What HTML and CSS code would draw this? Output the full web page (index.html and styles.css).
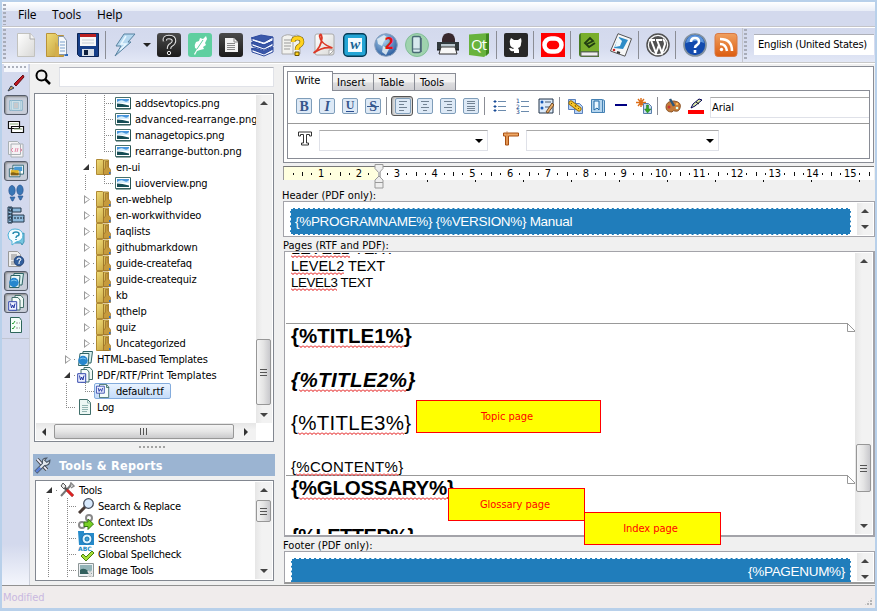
FILE: index.html
```
<!DOCTYPE html>
<html lang="en">
<head>
<meta charset="utf-8">
<title>Manual template editor</title>
<link rel="stylesheet" href="styles.css">
</head>
<body>
<svg class="defs" width="0" height="0">
  <defs>
    <linearGradient id="gold" x1="0" x2="1" y1="0" y2="1"><stop offset="0" stop-color="#f0dc78"/><stop offset="1" stop-color="#c09a38"/></linearGradient>
    <linearGradient id="dark" x1="0" x2="0" y1="0" y2="1"><stop offset="0" stop-color="#4a4a4a"/><stop offset="1" stop-color="#1b1b1b"/></linearGradient>
    <linearGradient id="orange" x1="0" x2="0" y1="0" y2="1"><stop offset="0" stop-color="#f0a060"/><stop offset="1" stop-color="#dc5c10"/></linearGradient>
    <linearGradient id="paper" x1="0" x2="1" y1="0" y2="1"><stop offset="0" stop-color="#fff"/><stop offset="1" stop-color="#d8d8d6"/></linearGradient>
    <radialGradient id="globe" cx=".4" cy=".3" r=".8"><stop offset="0" stop-color="#a8d0f0"/><stop offset="1" stop-color="#1d4f94"/></radialGradient>
    <symbol id="pic" viewBox="0 0 16 16"><path d="M.5 2.500h15v11H.5z" fill="#fff" stroke="#47706c"/><path d="M2 4h12v4H2z" fill="#4795dc"/><path d="M2 7q4-3 7-1t5-1v3H2z" fill="#d4ecfa"/><path d="M2 8.500q5 0 12 2V12H2z" fill="#164d55"/><path d="M15.500 3v11H1" fill="none" stroke="#285453"/></symbol>
    <symbol id="folder" viewBox="0 0 16 16"><path d="M.5.500h6l1 .5h5v14.500H.5z" fill="url(#gold)" stroke="#b08a34"/><path d="M7.500 1v14" stroke="#a07a2c"/><path d="M9.500 2.500h2.500v5l2.500 3v5H7.500v-4l2-2.500z" fill="#c69a3c" stroke="#99702a" stroke-width=".7"/><path d="M13 13h1.500v2H13z" fill="#2a70d8"/></symbol>
    <symbol id="pages-web" viewBox="0 0 16 16"><path d="M6 .5h9.500L14 12H5z" fill="#d9efee" stroke="#2f6466"/><path d="M3 2.500h9L11 14.500H1.500z" fill="#eef8f8" stroke="#2f6466"/><circle cx="6" cy="9.500" r="4.700" fill="#2787ce"/><path d="M3 8q3-2 6 0" stroke="#7cc4ee" fill="none"/></symbol>
    <symbol id="pages-doc" viewBox="0 0 16 16"><path d="M7 .5h6l2.500 3v9H7z" fill="#eef7f5" stroke="#426e6a"/><path d="M4 2.500h6l2 2.500v10H4z" fill="#f7fcfa" stroke="#426e6a"/><path d="M.7 6.700h8v8.600h-8z" fill="#f0f3ff" stroke="#3448ad"/><path d="M2.500 8.500l1 4.500 1.200-3 1.200 3 1.100-4.500" stroke="#2337a3" fill="none"/></symbol>
    <symbol id="worddoc" viewBox="0 0 16 16"><path d="M4 .5h8l2.500 3v12H4z" fill="#f4fbf9" stroke="#3d6b67"/><path d="M12 1v3h3" fill="none" stroke="#3d6b67"/><path d="M.5 2.500h9v8h-9z" fill="#eef1ff" stroke="#3448ad"/><path d="M2.500 4.500l1 4 1.500-3 1.500 3 1-4" stroke="#2337a3" fill="none"/></symbol>
    <symbol id="logdoc" viewBox="0 0 16 16"><path d="M2.500.5h8l3 3v12h-11z" fill="#edf7f4" stroke="#406e6a"/><path d="M10.500 1v3h3M5 6.500h6M5 8.500h6M5 10.500h6M5 12.500h5" fill="none" stroke="#93b5b2"/></symbol>
    <symbol id="crossed" viewBox="0 0 16 16"><path d="M2 14L12 3" stroke="#777" stroke-width="2"/><path d="M3 3l11 11" stroke="#555" stroke-width="2.600"/><path d="M2 4l2-3 3 3-2 3z" fill="#e9e9e9" stroke="#555"/><path d="M11 4l1-3 3 3-3 2" fill="none" stroke="#888" stroke-width="1.500"/><path d="M8 8l6 6" stroke="#d22" stroke-width="2.600"/></symbol>
    <symbol id="btn" viewBox="0 0 16 16"><rect x=".5" y=".5" width="15" height="15" rx="1.500" fill="#dde9f6" stroke="#7f9db9"/></symbol>
    <symbol id="chain" viewBox="0 0 16 16"><path d="M1.500 1.500h7v10h-7zM7.500 5.500h5l3 3v7h-8z" fill="#b7d2f5" stroke="#5b82bd"/><path d="M4 5l8 6" stroke="#9a6a00" stroke-width="5" stroke-linecap="round"/><path d="M4 5l8 6" stroke="#f5c52c" stroke-width="3.400" stroke-linecap="round"/><path d="M4 5l1 1M8 7l1 2M11 10l1 1" stroke="#7c5800"/></symbol>
  </defs>
</svg>

<div class="window">
  <nav class="menubar"><i class="grip"></i><span class="m-file">File</span><span class="m-tools">Tools</span><span class="m-help">Help</span></nav>

  <div class="toolbar">
    <i class="grip"></i>
    <div class="tools">
      <svg viewBox="0 0 24 24"><path d="M3.500.5h13l4 5v18h-17z" fill="url(#paper)" stroke="#c2c2be"/><path d="M16 .5v5.500h5" fill="#f4f4f4" stroke="#aaa"/></svg>
      <svg viewBox="0 0 24 24"><path d="M1.500.5h9l2 2h6v21h-17z" fill="url(#gold)" stroke="#b99239"/><path d="M13.500 3.500h5l3 4v14h-8z" fill="#f6f9fc" stroke="#8796aa"/><path d="M15 9h5M15 12h5M15 15h5M15 18h5" stroke="#7ba0cc"/><path d="M10 0v9l4 5v9.500h-4z" fill="#d4ae4c"/><path d="M21 21h2v2h-4z" fill="#2868bb"/></svg>
      <svg viewBox="0 0 24 24"><path d="M1.500.5h21v23h-19l-2-2z" fill="#173f88" stroke="#0d2453"/><path d="M4 1h16v3H4z" fill="#bb2020"/><path d="M4 4h16v9H4z" fill="#f8f8f8"/><path d="M6 7h12M6 10h12" stroke="#c6ced6"/><path d="M6 16h12v7H6z" fill="#d8dfe8"/><path d="M8 17h4v5H8z" fill="#10203d"/></svg>
      <i class="sep"></i>
      <svg viewBox="0 0 24 24"><path d="M11 1h11l-7 8h3L2 23l6-10H3z" fill="#b5d8f0" stroke="#57819f"/><path d="M13 3L8 11h5L7 17" fill="none" stroke="#e9f7ff" stroke-width="1.500"/></svg>
      <i class="drop"></i>
      <svg viewBox="0 0 24 24"><rect width="24" height="24" rx="3" fill="url(#dark)"/><path d="M8 8Q7 4 12 4t5 4q0 2-3 4-2 1-2 4" fill="none" stroke="#e8e8e8" stroke-width="4.500"/><path d="M8 8Q7 4 12 4t5 4q0 2-3 4-2 1-2 4" fill="none" stroke="#292929" stroke-width="2.500"/><circle cx="12" cy="20" r="1.700" fill="#222" stroke="#eee"/></svg>
      <svg viewBox="0 0 24 24"><rect width="24" height="24" rx="3" fill="#5fcfa0"/><path d="M6 21l3-5-2-1q-1-3 1-6l3-1 1-3 3 1 3-3 1 3-2 4 1 2-3 2 1 2-4 1-3 1-2 4z" fill="#fff"/><path d="M9 16l6-9" stroke="#5fcfa0"/></svg>
      <svg viewBox="0 0 24 24"><rect width="24" height="24" rx="3" fill="url(#dark)"/><path d="M6 5h9l4 4v10H6z" fill="#f3f3f3"/><path d="M15 5v4h4M8 10.500h8M8 12.500h8M8 14.500h8M8 16.500h8" fill="none" stroke="#888"/></svg>
      <svg viewBox="0 0 24 24"><g stroke="#2e4a9d" fill="#f3f6ff"><path d="M2 17v2l12 4 9-4v-3M2 11v2l12 4 9-4v-3M2 6v2l12 4 9-4V4"/><path d="M1 16l3-1 10 3 9-4v2l-9 5zM1 10l3-1 10 3 9-4v2l-9 5zM1 5l10-3 12 2-9 5z" fill="#3a58aa"/></g></svg>
      <svg viewBox="0 0 24 24"><path d="M1 4q5-4 11-1v18H1zM12 3q4-2 7 0v18h-7" fill="#f2f2ef" stroke="#aaa"/><path d="M3 7h7M3 10h7M3 13h7M3 16h6" stroke="#999"/><path d="M12 9q0-4 4.500-4t4.500 4q0 2-3 4-2 1-2 4" fill="none" stroke="#6b5400" stroke-width="4.500"/><path d="M12 9q0-4 4.500-4t4.500 4q0 2-3 4-2 1-2 4" fill="none" stroke="#ffd21e" stroke-width="3.500"/><path d="M14 19h4v3.500h-4z" fill="#ffd21e" stroke="#6b5400"/></svg>
      <svg viewBox="0 0 24 24"><rect x="3" y="1" width="19" height="21" rx="2" fill="url(#paper)" stroke="#aaa"/><path d="M22 17l-5 5v-5z" fill="#fff" stroke="#aaa"/><path d="M1.500 20Q9 15 10 5 9-1 7.500 3q1 8 13 12-9-2-19 5z" fill="none" stroke="#dc3826" stroke-width="1.700"/></svg>
      <svg viewBox="0 0 24 24"><rect x=".7" y=".7" width="22.600" height="22.600" rx="4" fill="#24a5d5" stroke="#063b55" stroke-width="1.400"/><path d="M5 5h14v14H5z" fill="#f4fbff"/><text x="12" y="16" class="wglyph">w</text></svg>
      <svg viewBox="0 0 24 24"><circle cx="12" cy="12" r="11.300" fill="url(#globe)" stroke="#8ba1bd"/><path d="M3 6l7-4 4 3-4 3-2 5-4-2zM9 13l6 3-3 6-4-3z" fill="#e6eff5" opacity=".85"/><text x="15" y="16" class="two">2</text></svg>
      <svg viewBox="0 0 24 24"><circle cx="12" cy="12" r="11.500" fill="#9fd3ae" stroke="#82bd98"/><rect x="7.500" y="3.500" width="8" height="16" rx="1.500" fill="#d7e9ee" stroke="#496b75" stroke-width="1.400"/><path d="M8 16h7M16.500 5v14" stroke="#607c88"/></svg>
      <svg viewBox="0 0 24 24"><path d="M6 10V6q1-6 6.500-6T19 6v4z" fill="#38282d"/><path d="M1 9h22v8H1z" fill="#31393d"/><path d="M5 11h14v5H5z" fill="#b9c5cc"/><path d="M5 14h14l2 7H3z" fill="#f8f8f8" stroke="#303030"/><path d="M1 17h3M20 17h3" stroke="#111"/></svg>
      <svg viewBox="0 0 24 24"><path d="M2 1.500L22 0v20l-5 4-15-2z" fill="#68b33d"/><path d="M19 1h3v19l-3 3z" fill="#40871f"/><text x="11.500" y="17" class="qt">Qt</text></svg>
      <i class="sep"></i>
      <svg viewBox="0 0 24 24"><rect width="24" height="24" rx="2" fill="#282828"/><path d="M7 5l3 2h4l3-2q1 3 0 6 0 3-3 4l1 2v3h-5v-2q-3 1-4-1l-1-2q3 0 4 1l1-1q-4-1-4-4-1-3 1-6z" fill="#fff"/></svg>
      <i class="sep"></i>
      <svg viewBox="0 0 24 24"><path d="M0 0h24v24H0z" fill="#f00"/><rect x="3.500" y="5.500" width="17" height="13" rx="6.500" fill="none" stroke="#fff" stroke-width="4.500"/></svg>
      <i class="sep"></i>
      <svg viewBox="0 0 24 24"><path d="M1 3q0-3 3-3h17v24H4q-3 0-3-3z" fill="#477b22"/><path d="M3 0h18v18H3z" fill="#79ae2c"/><path d="M3 19h17v4H3z" fill="#eee" stroke="#666"/><path d="M9 11l6-3-3-3-5 5 4 4 6-4" fill="none" stroke="#213d12" stroke-width="1.900"/></svg>
      <svg viewBox="0 0 24 24"><path d="M9 .7l13.500 5-6.500 17.500L1.500 18z" fill="#f7f7f7" stroke="#555"/><path d="M10 4l9 3-5 9-9-1z" fill="#2e8cc7"/><path d="M9 4l4 4-2 5-5 1z" fill="#eff8fc"/><circle cx="5" cy="17" r="1.300" fill="#c22"/><path d="M8 19l3 1" stroke="#333" stroke-width="2"/></svg>
      <i class="sep"></i>
      <svg viewBox="0 0 24 24"><circle cx="12" cy="12" r="11" fill="#f7f7f7" stroke="#505050" stroke-width="1.500"/><circle cx="12" cy="12" r="9" fill="#505050"/><path d="M3 7h6M10 7h6M5 7l5 13 3-8M11 7l5 13 3-9q0-3-2-5" fill="none" stroke="#fff" stroke-width="2"/></svg>
      <i class="sep"></i>
      <svg viewBox="0 0 24 24"><circle cx="12" cy="12" r="11" fill="#124aae" stroke="#82919f" stroke-width="1.700"/><path d="M3 10Q4 2 12 2t9 8q-8-4-18 0z" fill="#5c94dc"/><path d="M8 9q0-4 4-4t4 4q0 2-2 3-2 1-2 3M12 17v3" fill="none" stroke="#fff" stroke-width="2.600"/></svg>
      <svg viewBox="0 0 24 24"><rect x="1" y=".5" width="22" height="23" rx="3" fill="url(#orange)" stroke="#d87945"/><path d="M6 11q6 0 7 7M6 6q12 0 12 12" fill="none" stroke="#fff" stroke-width="2.500"/><circle cx="7.500" cy="16.500" r="1.700" fill="#fff"/></svg>
    </div>
    <div class="language"><i class="grip"></i><span class="lang-box">English (United States)</span></div>
  </div>

  <main class="workspace">
    <aside class="sidebar">
      <i class="hgrip"></i>
      <b><svg viewBox="0 0 18 18"><path d="M7 10L16 1l1 2-8 9z" fill="#c11720" stroke="#650d12"/><path d="M1 17l3-5 3 2z" fill="#d49e4e" stroke="#344154"/></svg></b>
      <b class="on"><svg viewBox="0 0 18 18"><path d="M2 4h14v11H2z" fill="#d8e6ec" stroke="#7babc4"/><path d="M4 4v11M14 4v11M6 6h6v7H6z" fill="#c8c9cc" stroke="#a7cadb"/></svg></b>
      <b><svg viewBox="0 0 18 18"><path d="M1.500 3.500h11v7h-11zM4.500 8.500h12v6h-12z" fill="#fff" stroke="#111" stroke-width="1.200"/><path d="M3 6h8M7 11h8" stroke="#87ac79"/></svg></b>
      <b><svg viewBox="0 0 18 18"><path d="M1.500 1.500h9l3 3v10h-12zM4 4h12v13H4z" fill="#f5f3f5" stroke="#a9b0b4"/><path d="M6 8l-2 2 2 2M13 8l2 2-2 2M8 12l1-4M10 12l1-4" fill="none" stroke="#e58aa8"/></svg></b>
      <b class="on"><svg viewBox="0 0 18 18"><path d="M5.500 2.500h12v10h-12zM1.500 6.500h12v9h-12z" fill="#fff" stroke="#255f6b"/><path d="M7 4h9v5H7z" fill="#4a9bd5"/><path d="M3 8h9v5H3z" fill="#e1b528"/><path d="M3 11q3-1 5 0t4 0v3H3z" fill="#846114"/></svg></b>
      <b><svg viewBox="0 0 18 18"><g fill="#3976b5" stroke="#254e8b" stroke-width=".6"><ellipse cx="5" cy="6.500" rx="3.200" ry="5"/><ellipse cx="13" cy="6" rx="3.200" ry="5"/><path d="M3 13h5l-2 4H5zM11 12h5l-2 4h-1z"/></g></svg></b>
      <b><svg viewBox="0 0 18 18"><path d="M1 1h4v16H1zM5 2h9v4H5zM5 9h12v7H5z" fill="#8db9dc" stroke="#263b4e"/><path d="M3 1v16M1 4h4M1 8h4M1 12h4M7 12h10" stroke="#151f2a" stroke-dasharray="2 1"/></svg></b>
      <b><svg viewBox="0 0 18 18"><path d="M11 8l6-3v9l-2 3-1-2H8z" fill="#76c5df" stroke="#4294b4"/><path d="M8 1q7 0 8 6 0 6-7 7l-4 3v-4q-4-1-4-6 1-6 7-6z" fill="#f2fcff" stroke="#4db2d8"/><path d="M6 6q0-2 3-2t3 2q0 2-2 2-1 1-1 2M9 11v1" fill="none" stroke="#238aae" stroke-width="1.500"/></svg></b>
      <b><svg viewBox="0 0 18 18"><path d="M1.500 1.500h9l3 3v12h-12z" fill="#eee" stroke="#999"/><path d="M4 5h6M4 7h7M4 9h7M4 12h5M4 14h5" stroke="#888"/><circle cx="12" cy="11" r="4.800" fill="#315f9e" stroke="#264579"/><path d="M10 10q0-2 2-2t2 2q-2 0-2 3v1" fill="none" stroke="#fff"/></svg></b>
      <b class="on"><svg viewBox="0 0 16 16"><use href="#pages-web"/></svg></b>
      <b class="on"><svg viewBox="0 0 16 16"><use href="#pages-doc"/></svg></b>
      <b><svg viewBox="0 0 18 18"><path d="M3.500 1.500h9l2 3v12h-11z" fill="#f5fffa" stroke="#2e665b"/><path d="M5 7l1 1 2-3M5 12l1 1 2-3" fill="none" stroke="#2ba23a"/><path d="M9 7h4M9 12h4" stroke="#999" stroke-dasharray="2 1"/></svg></b>
      <i class="side-end"></i>
    </aside>

    <section class="explorer">
      <div class="search"><svg viewBox="0 0 16 16"><circle cx="6.500" cy="6.500" r="5" fill="none" stroke="#000" stroke-width="2"/><path d="M10 10l5 5" stroke="#000" stroke-width="2.500"/></svg><span></span></div>
      <div class="tree-box">
        <div class="tree-main">
          <div class="tree">
            <p><i class="line"></i><i class="line"></i><i class="tee"></i><svg><use href="#pic"/></svg><span>addsevtopics.png</span></p>
            <p><i class="line"></i><i class="line"></i><i class="tee"></i><svg><use href="#pic"/></svg><span class="wide">advanced-rearrange.png</span></p>
            <p><i class="line"></i><i class="line"></i><i class="tee"></i><svg><use href="#pic"/></svg><span>managetopics.png</span></p>
            <p><i class="line"></i><i class="line"></i><i class="elbow"></i><svg><use href="#pic"/></svg><span class="wide">rearrange-button.png</span></p>
            <p><i class="line"></i><i class="open"></i><svg><use href="#folder"/></svg><span>en-ui</span></p>
            <p><i class="line"></i><i class="line"></i><i class="elbow"></i><svg><use href="#pic"/></svg><span>uioverview.png</span></p>
            <p><i class="line"></i><i class="closed"></i><svg><use href="#folder"/></svg><span>en-webhelp</span></p>
            <p><i class="line"></i><i class="closed"></i><svg><use href="#folder"/></svg><span>en-workwithvideo</span></p>
            <p><i class="line"></i><i class="closed"></i><svg><use href="#folder"/></svg><span>faqlists</span></p>
            <p><i class="line"></i><i class="closed"></i><svg><use href="#folder"/></svg><span>githubmarkdown</span></p>
            <p><i class="line"></i><i class="closed"></i><svg><use href="#folder"/></svg><span>guide-createfaq</span></p>
            <p><i class="line"></i><i class="closed"></i><svg><use href="#folder"/></svg><span>guide-createquiz</span></p>
            <p><i class="line"></i><i class="closed"></i><svg><use href="#folder"/></svg><span>kb</span></p>
            <p><i class="line"></i><i class="closed"></i><svg><use href="#folder"/></svg><span>qthelp</span></p>
            <p><i class="line"></i><i class="closed"></i><svg><use href="#folder"/></svg><span>quiz</span></p>
            <p><i class="line"></i><i class="closed"></i><svg><use href="#folder"/></svg><span>Uncategorized</span></p>
            <p><i class="closed"></i><svg><use href="#pages-web"/></svg><span>HTML-based Templates</span></p>
            <p><i class="open"></i><svg><use href="#pages-doc"/></svg><span class="wide">PDF/RTF/Print Templates</span></p>
            <p><i class="line"></i><i class="elbow"></i><em><svg><use href="#worddoc"/></svg><span>default.rtf</span></em></p>
            <p><i class="elbow"></i><svg><use href="#logdoc"/></svg><span>Log</span></p>
          </div>
          <div class="vscroll"><i class="up"></i><i class="thumb main-thumb"></i><i class="down"></i></div>
        </div>
        <div class="hscroll"><i class="left"></i><i class="hthumb"></i><i class="right"></i></div>
      </div>
      <i class="splitter"></i>
      <h2><svg viewBox="0 0 16 16"><path d="M3 2l9 10" stroke="#444" stroke-width="3.500"/><path d="M3 2l9 10" stroke="#eef" stroke-width="1.700"/><path d="M15 3l-3 2-2-2 2-2q-4 0-4 3v2l-7 7 2 2 7-7q5 0 5-5z" fill="#e4e9ef" stroke="#4a5666"/><path d="M2 14l4-4" stroke="#5b82d8" stroke-width="2.500"/></svg>Tools &amp; Reports</h2>
      <div class="tools-box">
        <div class="tree">
          <p><i class="open"></i><svg><use href="#crossed"/></svg><span>Tools</span></p>
          <p><i class="line"></i><i class="tee"></i><svg viewBox="0 0 16 16"><path d="M8 8l-7 7" stroke="#493b35" stroke-width="3"/><circle cx="10.500" cy="5.500" r="4.800" fill="#d8e9fc" stroke="#444c5b" stroke-width="1.300"/></svg><span>Search &amp; Replace</span></p>
          <p><i class="line"></i><i class="tee"></i><svg viewBox="0 0 16 16"><circle cx="4" cy="11" r="3" fill="none" stroke="#888" stroke-width="2"/><circle cx="11" cy="4" r="3" fill="none" stroke="#888" stroke-width="2"/><path d="M6 8h4V5l5.500 5-5.500 5.500v-3H6z" fill="#78d025" stroke="#347812"/></svg><span>Context IDs</span></p>
          <p><i class="line"></i><i class="tee"></i><svg viewBox="0 0 16 16"><path d="M0 1h6v2h10v12H1z" fill="#258aca"/><circle cx="9" cy="9" r="5" fill="#dff5ff" stroke="#116aab"/><circle cx="9" cy="9" r="2" fill="#42a2d8" stroke="#1474af"/></svg><span>Screenshots</span></p>
          <p><i class="line"></i><i class="tee"></i><svg viewBox="0 0 16 16"><text x="0" y="5" class="abc">ABC</text><path d="M3 10l2-2 3 3 6-6 2 2-8 8z" fill="#a5df36" stroke="#497f10"/></svg><span>Global Spellcheck</span></p>
          <p><i class="line"></i><i class="tee"></i><svg viewBox="0 0 16 16"><path d="M.5 1.500h15v13H.5z" fill="#edf0f3" stroke="#8d9696"/><path d="M2 3h12v9H2z" fill="#93b4b8"/><path d="M2 8q4-3 8 1t4 1v2H2z" fill="#315f5d"/><path d="M10 9l4 6M14 9l-4 6" stroke="#ddd" stroke-width="2"/></svg><span>Image Tools</span></p>
        </div>
        <div class="vscroll"><i class="up"></i><i class="thumb tools-thumb"></i><i class="down"></i></div>
      </div>
    </section>

    <section class="editor">
      <div class="ribbon">
        <div class="tabs"><span class="current">Write</span><span>Insert</span><span>Table</span><span>Tools</span></div>
        <div class="panel">
          <div class="row-one">
            <svg><use href="#btn"/><text x="8" y="13" class="g-b">B</text></svg>
            <svg><use href="#btn"/><text x="8" y="13" class="g-i">I</text></svg>
            <svg><use href="#btn"/><text x="8" y="11" class="g-u">U</text><path d="M4 13.500h8" stroke="#2b4f91"/></svg>
            <svg><use href="#btn"/><text x="8" y="13" class="g-b">S</text><path d="M2 8.500h12" stroke="#35588f"/></svg>
            <i class="sep"></i>
            <div class="pressed"><svg><use href="#btn"/><path d="M4 3.500h8M4 6.500h5M4 9.500h8M4 12.500h5" stroke="#718293"/></svg></div>
            <svg><use href="#btn"/><path d="M4 3.500h8M6 6.500h4M4 9.500h8M6 12.500h4" stroke="#718293"/></svg>
            <svg><use href="#btn"/><path d="M4 3.500h8M7 6.500h5M4 9.500h8M7 12.500h5" stroke="#718293"/></svg>
            <svg><use href="#btn"/><path d="M4 3.500h8M4 5.500h8M4 8.500h8M4 10.500h8M4 12.500h8" stroke="#718293"/></svg>
            <i class="sep"></i>
            <svg><path d="M6 3.500h8M6 8.500h8M6 12.500h8" stroke="#6b8bad"/><path d="M3 2v3M1.500 3.500h3M3 7v3M1.500 8.500h3M3 11v3M1.500 12.500h3" stroke="#174a96"/></svg>
            <svg><path d="M6 3.500h8M6 8.500h8M6 13.500h8" stroke="#6b8bad"/><text x="1" y="5" class="tiny">1</text><text x="1" y="10.500" class="tiny">2</text><text x="1" y="16" class="tiny">3</text></svg>
            <svg><path d="M1 1h14v14H1z" fill="#ddebfa" stroke="#213348"/><path d="M7 4h6M7 9h6" stroke="#445b70"/><circle cx="4" cy="4" r="1.500" fill="#1559b7"/><circle cx="4" cy="10" r="1.500" fill="#1559b7"/><path d="M8 14l6-9 2 2-6 8z" fill="#e8b06c" stroke="#704925"/></svg>
            <i class="sep"></i>
            <svg><use href="#chain"/></svg>
            <svg><path d="M1.500 1.500h11l2 1v12h-13z" fill="#b5d5ee" stroke="#4682b4"/><path d="M4 3h5v9l-2-2-3 2z" fill="#eaf7ff" stroke="#1d68a7"/><path d="M12.500 2v12" stroke="#4682b4"/></svg>
            <svg><path d="M2 7h12" stroke="#000082" stroke-width="2"/></svg>
            <svg><path d="M5 0v9M0 4.500h10M2 1l6 7M8 1L2 8" stroke="#dc6d17" stroke-width="1.400"/><path d="M7.500 5.500h5l3 3v7h-8z" fill="#c9dcf3" stroke="#597faa"/><path d="M10.500 7h2v4h2.500l-3.500 4-3-4h2z" fill="#33a624" stroke="#14751a" stroke-width=".5"/></svg>
            <i class="sep"></i>
            <svg><path d="M1 9Q1 3 9 3q8 1 6 7-1 4-5 3-2-1-3 1-6 0-6-5z" fill="#c47c39" stroke="#8a5428"/><path d="M5 1l4 7" stroke="#2d5879" stroke-width="2.500"/><circle cx="4" cy="9" r="1.500" fill="#c33"/><circle cx="12" cy="6" r="1.300" fill="#fb5"/><circle cx="12" cy="10" r="1.300" fill="#dfe"/></svg>
            <svg><path d="M0 12h16v4H0z" fill="#f00"/><path d="M3 10l2-4 6-5 3 1-7 6z" fill="#dbe8a4" stroke="#000057"/><path d="M8 4l3 2" stroke="#111"/></svg>
            <span class="font-box">Arial</span>
          </div>
          <div class="row-two">
            <svg class="type" viewBox="0 0 16 16"><path d="M1.500 1.500h13v4h-2V4h-3v8.500h2v2h-7v-2h2V4h-3v1.500h-2z" fill="#fff" stroke="#333"/></svg>
            <span class="combo style-box"></span>
            <svg class="ruler-icon" viewBox="0 0 16 16"><path d="M.5 2.500h15v3h-10v9h-3v-9h-2z" fill="#efa866" stroke="#a74e11"/><path d="M4 1v14" stroke="#bb601c" stroke-dasharray="1 1"/></svg>
            <span class="combo para-box"></span>
          </div>
        </div>
      </div>

      <div class="ruler">
        <div class="scale"><i></i><b>1</b><b>2</b><b>3</b><b>4</b><b>5</b><b>6</b><b>7</b><b>8</b><b>9</b><b>10</b><b>11</b><b>12</b><b>13</b><b>14</b><b>15</b><b></b></div>
        <div class="stops"></div>
        <svg class="marker" viewBox="0 0 10 25"><path d="M1 .5h8v4L5 9 1 4.500z" fill="#eee" stroke="#999"/><path d="M4 8h3v8H4z" fill="#bbb"/><path d="M5 12l4 4v2.500H1V16zM1 18.500h8V24H1z" fill="#eee" stroke="#999"/></svg>
      </div>

      <h3 class="header-label">Header (PDF only):</h3>
      <div class="field header-field"><div class="band">{%PROGRAMNAME%} {%VERSION%} Manual</div><div class="vscroll mini"><i class="up"></i><i class="down"></i></div></div>
      <h3 class="pages-label">Pages (RTF and PDF):</h3>
      <div class="field pages">
        <div class="document">
          <div class="doc-line level1"><u>LEVEL1</u> TEXT</div>
          <div class="doc-line level2"><u>LEVEL2</u> TEXT</div>
          <div class="doc-line level3"><u>LEVEL3</u> TEXT</div>
          <div class="break"><svg viewBox="0 0 9 9"><path d="M.5 0v8.500H8.500L.5.5" fill="#fff" stroke="#999"/></svg></div>
          <div class="doc-line title1">{<u>%TITLE1%</u>}</div>
          <div class="doc-line title2">{<u>%TITLE2%</u>}</div>
          <div class="doc-line title3">{<u>%TITLE3%</u>}</div>
          <div class="doc-line content">{<u>%CONTENT%</u>}</div>
          <div class="break"><svg viewBox="0 0 9 9"><path d="M.5 0v8.500H8.500L.5.5" fill="#fff" stroke="#999"/></svg></div>
          <div class="doc-line glossary">{<u>%GLOSSARY%</u>}</div>
          <div class="doc-line letter">{%LETTER%}</div>
        </div>
        <div class="vscroll"><i class="up"></i><i class="thumb pages-thumb"></i><i class="down"></i></div>
      </div>
      <h3 class="footer-label">Footer (PDF only):</h3>
      <div class="field footer-field"><div class="band">{%PAGENUM%}</div><div class="vscroll mini"><i class="up"></i><i class="down"></i></div></div>
    </section>
  </main>

  <footer class="status"><span>Modified</span><i class="sizegrip"></i></footer>
  <div class="note topic">Topic page</div>
  <div class="note gloss">Glossary page</div>
  <div class="note index">Index page</div>
</div>
</body>
</html>
```
FILE: styles.css
```
* { box-sizing: border-box; }
body { margin: 0; font: 11px "DejaVu Sans Condensed", "DejaVu Sans", sans-serif; font-stretch: condensed; color: #000; letter-spacing: -.3px; }
p, h2, h3 { margin: 0; font: inherit; }
i { font-style: normal; display: block; }
svg { display: block; flex: none; }
.defs { position: absolute; }
.window { position: relative; width: 877px; height: 611px; overflow: hidden; display: flex; flex-direction: column; border: solid #b8d0ea; border-width: 2px 2px 3px; background: #f0f0f0; }

.menubar { height: 25px; flex: none; display: flex; align-items: center; background: linear-gradient(#fff, #e8edf7 9px, #d3d9ed 9px); border-bottom: 1px solid #c4c4c8; font: 12px "Open Sans", sans-serif; letter-spacing: -.15px; }
.menubar span { padding-top: 1px; }
.grip { width: 3px; height: 21px; margin-left: 1px; background: repeating-linear-gradient(#a8acb8 0 2px, transparent 2px 4px); flex: none; }
.m-file { margin-left: 12px; width: 34px; }
.m-tools { width: 45px; }

.toolbar { height: 36px; flex: none; display: flex; align-items: center; background: linear-gradient(#fff 0 1px, #d3d9ed 1px, #d6dcef 60%, #e3e8f6); border-bottom: 1px solid #c8c8c8; }
.toolbar > .grip, .language .grip { height: 31px; }
.tools { margin-left: 8px; width: 728px; display: flex; gap: 7px; align-items: center; }
.tools svg { width: 24px; height: 24px; }
.sep { width: 1px; height: 28px; margin-left: -2px; background: #8b8d95; flex: none; }
.drop { width: 20px; margin: 0 -7px; display: flex; justify-content: center; flex: none; }
.drop::before { content: ""; border: solid transparent; border-width: 4px 4px 0; border-top-color: #222; }
.language { display: flex; align-items: center; height: 34px; flex: 1; border-left: 1px solid #c4c6ce; }
.lang-box { margin: 0 1px 0 7px; flex: 1; height: 21px; line-height: 20px; background: #fff; border-top: 1px solid #aeb0b8; padding-left: 4px; white-space: nowrap; letter-spacing: -.2px; }
.wglyph { font: italic bold 15px "Liberation Serif", serif; fill: #1b6595; text-anchor: middle; }
.two { font: bold 15px "DejaVu Sans Condensed", sans-serif; fill: #e31212; text-anchor: middle; }
.qt { font: 15px "Open Sans", sans-serif; fill: #fff; text-anchor: middle; letter-spacing: -1px; }

.workspace { display: flex; height: 522px; flex: none; border-top: 1px solid #fff; }
.sidebar { width: 28px; flex: none; background: linear-gradient(#d3d9ed 480px, #f2f4fb 519px); border-right: 1px solid #ccd0da; display: flex; flex-direction: column; align-items: center; }
.hgrip { width: 24px; height: 8px; flex: none; background: repeating-linear-gradient(90deg, #acb0bb 0 2px, transparent 2px 4px) 0 2px / 100% 2px no-repeat, #f5f7fc; }
.sidebar b { width: 24px; height: 22px; display: flex; align-items: center; justify-content: center; flex: none; }
.sidebar b svg { width: 18px; height: 18px; }
.sidebar .on { height: 20px; margin: 1px 0; border: 1px solid #555c6a; border-radius: 3px; background: #c8cdd9; box-shadow: inset 1px 1px 2px #888; }
.sidebar .on svg { height: 16px; width: 16px; }
.side-end { width: 100%; height: 3px; border-bottom: 1px solid #c0c5d2; }

.explorer { width: 246px; padding: 2px 1px 0 3px; display: flex; flex-direction: column; flex: none; }
.search { height: 27px; display: flex; padding-left: 2px; }
.search svg { width: 16px; height: 16px; margin-top: 3px; }
.search span { width: 215px; height: 20px; margin: 1px 0 0 8px; border: 1px solid #e0e2e8; border-top-color: #b0b2ba; background: #fff; }
.tree-box { width: 240px; height: 349px; flex: none; margin-left: 1px; border: 1px solid #828790; background: #fff; padding: 1px; }
.tree-main { display: flex; height: 328px; }
.tree { width: 220px; flex: none; overflow: hidden; padding-left: 21px; }
.tree p { display: flex; height: 16px; line-height: 16px; white-space: nowrap; }
.tree svg { width: 16px; height: 16px; margin-left: 1px; }
.tree span { margin-left: 4px; line-height: 18px; letter-spacing: -.17px; }
.tree .wide { letter-spacing: 0; }
.tree i { width: 19px; height: 16px; flex: none; }
.line { background: repeating-linear-gradient(#888 0 1px, transparent 1px 2px) 9px 0 / 1px 16px no-repeat; }
.tee, .elbow { background: repeating-linear-gradient(#888 0 1px, transparent 1px 2px) 9px 0 / 1px 16px no-repeat, repeating-linear-gradient(90deg, #888 0 1px, transparent 1px 2px) 9px 8px / 10px 1px no-repeat; }
.elbow { background-size: 1px 8px, 10px 1px; }
.open, .closed { background: repeating-linear-gradient(90deg, #888 0 1px, transparent 1px 2px) 17px 8px / 3px 1px no-repeat; position: relative; }
.open::before { content: ""; position: absolute; left: 7px; top: 5px; border: solid transparent; border-width: 0 0 6px 6px; border-bottom-color: #333; }
.closed::before { content: ""; position: absolute; left: 8px; top: 4px; width: 6px; height: 9px; background: #999; clip-path: polygon(0 0, 100% 50%, 0 100%); }
.closed::after { content: ""; position: absolute; left: 9px; top: 6px; width: 4px; height: 5px; background: #fff; clip-path: polygon(0 0, 100% 50%, 0 100%); }
.tree em { display: flex; font-style: normal; width: 77px; height: 16px; margin-left: -1px; border: 1px solid #84acdd; border-radius: 2px; background: linear-gradient(#e9f3ff, #c4dcfa); }
.tree em svg { height: 14px; margin-left: 0; }
.tree em span { margin-left: 5px; line-height: 16px; }

.vscroll { width: 17px; flex: none; display: flex; flex-direction: column; background: linear-gradient(90deg, #e6e6e6, #f2f2f2 40%); padding: 0 1px; margin-left: auto; }
.tree-main .vscroll { width: 16px; padding: 0 1px 0 0; }
.up, .down, .left, .right { width: 15px; height: 16px; flex: none; display: flex; align-items: center; justify-content: center; }
.up::before, .down::before { content: ""; border: solid transparent; border-width: 0 4px 4px; border-bottom-color: #444; }
.down::before { border-width: 4px 4px 0; border-top-color: #444; }
.left::before, .right::before { content: ""; border: solid transparent; border-width: 4px 4px 4px 0; border-right-color: #333; }
.right::before { border-width: 4px 0 4px 4px; border-left-color: #333; }
.down { margin-top: auto; }
.thumb { width: 15px; border: 1px solid #979797; border-radius: 2px; background: repeating-linear-gradient(#555 0 1px, transparent 1px 3px) 50% 50% / 7px 7px no-repeat, linear-gradient(90deg, #f4f4f4, #e4e4e4 50%, #c8c8cc); }
.main-thumb { height: 66px; margin-top: 228px; }
.tools-thumb { height: 22px; margin-top: 2px; }
.pages-thumb { height: 48px; margin-top: 175px; }
.hscroll { width: 220px; height: 17px; display: flex; align-items: center; background: linear-gradient(#e6e6e6, #f2f2f2 40%); }
.hthumb { width: 180px; height: 15px; margin-left: 3px; border: 1px solid #979797; border-radius: 2px; background: repeating-linear-gradient(90deg, #555 0 1px, transparent 1px 3px) 50% 50% / 8px 7px no-repeat, linear-gradient(#f4f4f4, #e5e5e5 50%, #cacacc); }
.right { margin-left: 4px; }
.splitter { width: 27px; height: 2px; margin: 4px auto 6px 106px; flex: none; background: repeating-linear-gradient(90deg, #a2a2a2 0 2px, transparent 2px 4px); }
h2 { height: 22px; flex: none; display: flex; align-items: center; background: #9bb4d2; color: #fff; font: bold 12.500px "DejaVu Sans Condensed", sans-serif; letter-spacing: .3px; }
h2 svg { width: 17px; height: 17px; margin: 0 8px 0 1px; }
.tools-box { width: 239px; height: 101px; flex: none; margin: 4px 0 0 2px; border: 1px solid #828790; background: #fff; padding: 1px; display: flex; }
.tools-box .tree { width: 218px; padding-left: 2px; }
.tools-box .tree span { letter-spacing: -.27px; }
.abc { font: bold 6px "DejaVu Sans", sans-serif; fill: #218ac4; letter-spacing: 0; }

.editor { width: 599px; padding-left: 7px; flex: none; display: flex; flex-direction: column; }
.ribbon { width: 591px; height: 97px; margin-top: 2px; border: 1px solid #898c95; background: #fff; padding: 3px; flex: none; }
.tabs { height: 20px; display: flex; align-items: flex-end; letter-spacing: 0; }
.tabs span { height: 17px; width: 41px; border: 1px solid #898c95; border-left: 0; border-bottom: 0; background: linear-gradient(#f3f3f3 50%, #dddddf 55%, #d0d0d4); line-height: 18px; padding-left: 5px; }
.tabs span:nth-child(2) { padding-left: 4px; }
.tabs .current { width: 46px; height: 20px; border-left: 1px solid #898c95; background: #fff; line-height: 18px; padding-left: 7px; margin-bottom: -1px; position: relative; letter-spacing: -.2px; }
.panel { width: 583px; height: 69px; border: 1px solid #898c95; }
.row-one { height: 33px; display: flex; gap: 7px; align-items: center; padding: 0 0 2px 8px; border-bottom: 1px solid #999; }
.row-one > svg, .pressed svg { width: 16px; height: 16px; }
.row-one .sep { height: 18px; }
.pressed { margin: 0 -3px; width: 22px; height: 20px; border: 1px solid #555; border-radius: 3px; padding: 1px 0 0 3px; background: #ddd; box-shadow: inset 1px 1px 2px #aaa; }
.g-b, .g-i { font: bold 14px "Liberation Serif", serif; fill: #36558b; text-anchor: middle; }
.g-i { font-style: italic; }
.g-u { font: bold 12px "Liberation Serif", serif; fill: #36558b; text-anchor: middle; }
.tiny { font: 6px "DejaVu Sans", sans-serif; fill: #124387; }
.font-box { height: 21px; flex: 1; line-height: 19px; margin: 3px 0 0 -1px; border: 1px solid #dfe1e8; border-top-color: #aaa; border-right: 0; padding-left: 1px; letter-spacing: -.1px; }
.row-two { height: 34px; display: flex; align-items: center; padding-left: 9px; }
.row-two svg { width: 16px; height: 17px; margin-top: -5px; }
.combo { height: 21px; margin-top: -1px; border: 1px solid #dfe1e8; border-top-color: #aaa; display: flex; align-items: center; justify-content: flex-end; padding-right: 4px; }
.combo::before { content: ""; border: solid transparent; border-width: 4px 4px 0; border-top-color: #000; }
.style-box { width: 169px; margin-left: 6px; }
.row-two .ruler-icon { margin-left: 15px; }
.para-box { width: 193px; margin-left: 7px; }

.ruler { position: relative; height: 25px; margin-top: 3px; flex: none; }
.scale { height: 14px; width: 591px; display: flex; overflow: hidden; border-top: 1px solid #777; border-left: 1px solid #999; background: linear-gradient(90deg, #ffffdf 95px, #fff 95px); letter-spacing: 0; }
.scale i { width: 18.300px; flex: none; background: linear-gradient(#111, #111) 8.500px 6px / 1px 2px no-repeat; }
.scale b { width: 37.800px; flex: none; font-weight: normal; text-align: center; line-height: 14px; background: linear-gradient(#111, #111) 0 5px / 1px 4px no-repeat, linear-gradient(#111, #111) 9px 6px / 1px 2px no-repeat, linear-gradient(#111, #111) 28px 6px / 1px 2px no-repeat; }
.stops { height: 2px; margin: 0 13px 0 144px; background: repeating-linear-gradient(90deg, #111 0 1px, transparent 1px 48px); }
.marker { position: absolute; left: 91px; top: -2px; width: 10px; height: 25px; }

h3 { flex: none; white-space: nowrap; line-height: 14px; height: 12px; letter-spacing: .03px; }
.header-label { margin: -2px 0 0 -1px; }
.pages-label { height: 14px; line-height: 17px; }
.footer-label { height: 14px; line-height: 17px; }
.field { flex: none; display: flex; background: #fff; border: 1px solid #a3a3a9; }
.header-field { width: 592px; height: 36px; padding: 1px; }
.band { width: 561px; height: 27px; margin: 5px 0 0 5px; border: 1px dashed #fff; background: #207dbb; color: #fff; font: 13.500px/26px "Liberation Sans", sans-serif; letter-spacing: -.3px; padding-left: 4px; }
.mini { width: 16px; padding: 0; }
.pages { width: 591px; height: 286px; margin-left: 1px; padding: 1px; border-width: 1px 2px 2px 1px; }
.document { width: 570px; height: 281px; overflow: hidden; font-family: "Liberation Sans", sans-serif; letter-spacing: 0; }
.doc-line { padding-left: 5px; white-space: nowrap; }
.doc-line u { text-decoration: none; padding-bottom: 1px; background: url("data:image/svg+xml,%3Csvg xmlns='http://www.w3.org/2000/svg' width='4' height='3'%3E%3Cpath d='M0 .5L2 2.500L4 .5' fill='none' stroke='%23e00000'/%3E%3C/svg%3E") 0 100% / 4px 3px repeat-x; }
.level1 { font-size: 16px; line-height: 18px; height: 18px; margin-top: -13px; }
.level2 { font-size: 14.500px; height: 17px; line-height: 17px; }
.level3 { font-size: 13.300px; height: 17px; line-height: 15px; letter-spacing: -.4px; }
.break { width: 570px; height: 1px; background: linear-gradient(90deg, #999 561px, transparent 561px); display: flex; justify-content: flex-end; }
.break svg { width: 9px; height: 9px; }
.level3 + .break { margin-top: 31px; }
.title1, .title2, .title3, .glossary, .letter { font-size: 20.500px; height: 24px; line-height: 23px; }
.title1, .title2, .glossary, .letter { font-weight: bold; }
.title2 { font-style: italic; margin-top: 20px; letter-spacing: .4px; }
.title3 { margin-top: 19px; letter-spacing: .3px; }
.content { font-size: 15px; height: 17px; line-height: 18px; margin-top: 23px; letter-spacing: .3px; }
.glossary { letter-spacing: -.25px; }
.letter { margin-top: 25px; font-size: 20px; letter-spacing: -.5px; }
.footer-field { width: 591px; height: 33px; margin-left: 1px; padding: 1px; border-bottom: 2px solid #999; overflow: hidden; }
.footer-field .band { height: 27px; width: 560px; text-align: right; padding-right: 5px; }

.status { flex: 1; display: flex; justify-content: space-between; border-top: 1px solid #919191; background: #f0ecec; color: #c9b8e0; line-height: 23px; padding-left: 1px; letter-spacing: -.1px; }
.sizegrip { width: 9px; height: 9px; margin: 11px 2px 0 0; background: radial-gradient(circle at 1px 1px, #b5b5b5 1px, transparent 1.200px) 0 0 / 3px 3px; clip-path: polygon(100% 0, 100% 100%, 0 100%); }
.note { position: absolute; display: flex; align-items: center; justify-content: center; height: 33px; border: 1px solid #f00; background: #ff0; color: #f00; letter-spacing: -.05px; }
.topic { left: 414px; top: 398px; width: 185px; padding-right: 3px; }
.gloss { left: 446px; top: 486px; width: 137px; padding-right: 3px; }
.index { left: 582px; top: 510px; width: 137px; padding-right: 4px; }
```
